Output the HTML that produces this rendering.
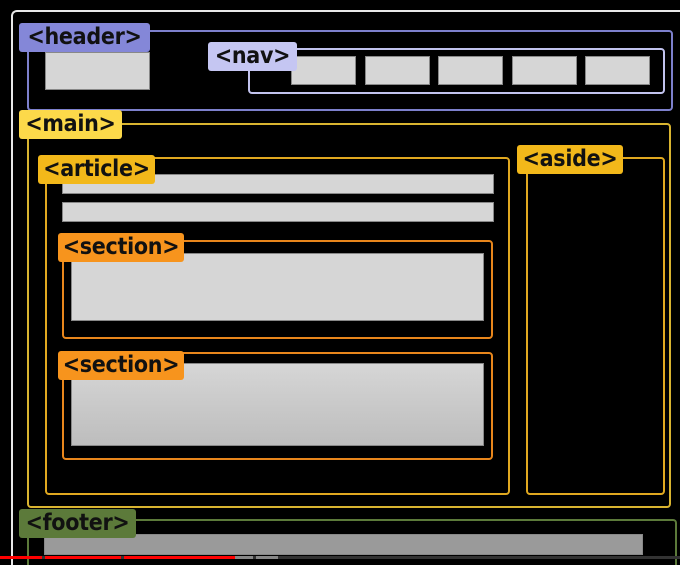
<!DOCTYPE html>
<html style="width:680px;height:565px;overflow:hidden;margin:0;"><head><meta charset="utf-8"><style>
body{margin:0;width:680px;height:565px;background:#000;position:relative;overflow:hidden;font-family:"DejaVu Sans Condensed","Liberation Sans",sans-serif;}
div{position:absolute;box-sizing:border-box;}
.b{border:2px solid;border-radius:4px;}
.g{background:#d6d6d6;border:1px solid #888;}
.l{font-weight:bold;font-size:23px;line-height:28px;color:#111;padding:0 3px;border-radius:3px;white-space:nowrap;letter-spacing:-0.3px;text-align:center;}
</style></head><body>
<div style="left:11px;top:10px;width:669px;height:555px;border:2px solid #e8e8e8;border-right:none;border-bottom:none;border-radius:6px 0 0 0;"></div>

<div class="b" style="left:27px;top:30px;width:646px;height:81px;border-color:#7d80cc;"></div>
<div class="g" style="left:45px;top:52px;width:105px;height:38px;"></div>
<div class="l" style="left:19px;top:23px;width:131px;height:29px;background:#8487d8;">&lt;header&gt;</div>

<div class="b" style="left:248px;top:48px;width:417px;height:46px;border-color:#c2c3ee;"></div>
<div class="g" style="left:291px;top:56px;width:65px;height:29px;"></div>
<div class="g" style="left:365px;top:56px;width:65px;height:29px;"></div>
<div class="g" style="left:438px;top:56px;width:65px;height:29px;"></div>
<div class="g" style="left:512px;top:56px;width:65px;height:29px;"></div>
<div class="g" style="left:585px;top:56px;width:65px;height:29px;"></div>
<div class="l" style="left:208px;top:42px;width:89px;height:29px;background:#c5c6f2;">&lt;nav&gt;</div>

<div class="b" style="left:27px;top:123px;width:644px;height:385px;border-color:#d9b430;"></div>
<div class="l" style="left:19px;top:110px;width:103px;height:29px;background:#fcd94a;">&lt;main&gt;</div>

<div class="b" style="left:45px;top:157px;width:465px;height:338px;border-color:#e0a820;"></div>
<div class="g" style="left:62px;top:174px;width:432px;height:20px;"></div>
<div class="g" style="left:62px;top:202px;width:432px;height:20px;"></div>
<div class="l" style="left:38px;top:155px;width:117px;height:29px;background:#f2b81a;">&lt;article&gt;</div>

<div class="b" style="left:62px;top:240px;width:431px;height:99px;border-color:#e8861c;"></div>
<div class="g" style="left:71px;top:253px;width:413px;height:68px;"></div>
<div class="l" style="left:58px;top:233px;width:126px;height:29px;background:#f7941d;">&lt;section&gt;</div>

<div class="b" style="left:62px;top:352px;width:431px;height:108px;border-color:#e8861c;"></div>
<div class="g" style="left:71px;top:363px;width:413px;height:83px;background:linear-gradient(#d6d6d6,#bdbdbd);"></div>
<div class="l" style="left:58px;top:351px;width:126px;height:29px;background:#f7941d;">&lt;section&gt;</div>

<div class="b" style="left:526px;top:157px;width:139px;height:338px;border-color:#e0a820;"></div>
<div class="l" style="left:517px;top:145px;width:106px;height:29px;background:#f2b81a;">&lt;aside&gt;</div>

<div style="left:27px;top:519px;width:650px;height:46px;border:2px solid #5c7a3a;border-bottom:none;border-radius:4px 4px 0 0;"></div>
<div class="g" style="left:44px;top:534px;width:599px;height:21px;background:#9a9a9a;"></div>
<div class="l" style="left:19px;top:509px;width:117px;height:29px;background:#5c7a3a;">&lt;footer&gt;</div>

<div style="left:0;top:556px;width:680px;height:3px;background:#333;"></div>
<div style="left:0;top:556px;width:42px;height:3px;background:#f00;"></div>
<div style="left:45px;top:556px;width:76px;height:3px;background:#f00;"></div>
<div style="left:124px;top:556px;width:111px;height:3px;background:#f00;"></div>
<div style="left:235px;top:556px;width:18px;height:3px;background:#888;"></div>
<div style="left:256px;top:556px;width:22px;height:3px;background:#888;"></div>
</body></html>
